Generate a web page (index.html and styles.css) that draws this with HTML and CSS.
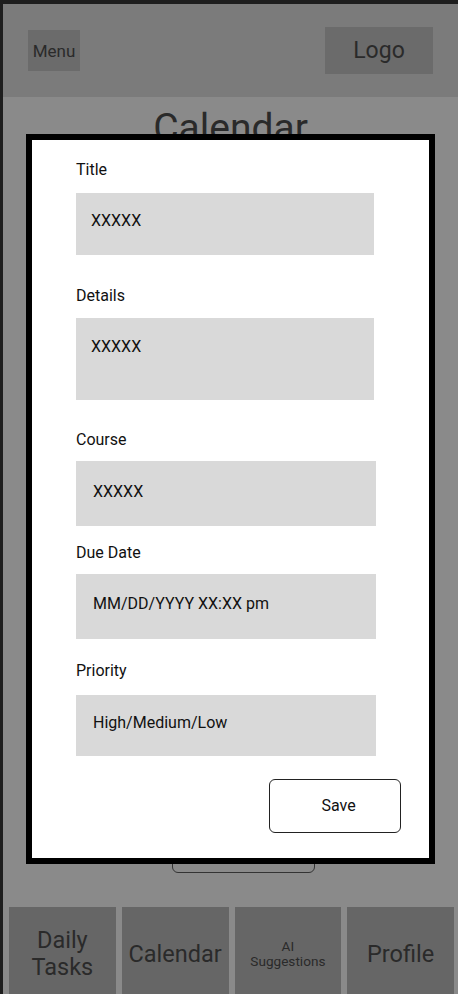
FILE: index.html
```html
<!DOCTYPE html>
<html>

<head>
    <title>Calendar - New Task</title>
    <meta charset="utf-8">
    <meta name="viewport" content="width=device-width, initial-scale=1">
    <link rel="stylesheet" href="styles.css">
</head>

<body>
    <div class="app">
        <header class="topbar">
            <div class="menu-btn">Menu</div>
            <div class="logo">Logo</div>
        </header>

        <main class="content">
            <h1 class="page-title">Calendar</h1>
            <div class="add-btn" aria-label="Add task"></div>
        </main>

        <nav class="tabbar">
            <div class="tab">Daily<br>Tasks</div>
            <div class="tab">Calendar</div>
            <div class="tab tab-small">AI<br>Suggestions</div>
            <div class="tab">Profile</div>
        </nav>

        <div class="modal">
            <form class="task-form">
                <div class="field field-title">
                    <label class="field-label">Title</label>
                    <div class="field-box">XXXXX</div>
                </div>
                <div class="field field-details">
                    <label class="field-label">Details</label>
                    <div class="field-box">XXXXX</div>
                </div>
                <div class="field field-course">
                    <label class="field-label">Course</label>
                    <div class="field-box">XXXXX</div>
                </div>
                <div class="field field-due">
                    <label class="field-label">Due Date</label>
                    <div class="field-box">MM/DD/YYYY XX:XX pm</div>
                </div>
                <div class="field field-priority">
                    <label class="field-label">Priority</label>
                    <div class="field-box">High/Medium/Low</div>
                </div>
                <button type="button" class="save-btn">Save</button>
            </form>
        </div>
    </div>
</body>

</html>
```

FILE: styles.css
```css
html,
body {
    margin: 0;
    height: 100%;
    overflow: hidden;
}

body {
    font-family: Roboto, "Noto Sans", sans-serif;
    background-color: #1e1e1e;
    color: #222222;
    padding: 4px 0 0 3px;
    box-sizing: border-box;
}

.app {
    position: relative;
    display: flex;
    flex-direction: column;
    height: 997px;
    background-color: #8a8a8a;
}

/* top bar */
.topbar {
    height: 93px;
    display: flex;
    justify-content: space-between;
    align-items: center;
    padding: 0 25px;
    background-color: #7b7b7b;
}

.menu-btn {
    width: 52px;
    height: 41px;
    display: flex;
    align-items: center;
    justify-content: center;
    font-size: 17px;
    background-color: #6b6b6b;
    color: #2a2a2a;
}

.logo {
    width: 108px;
    height: 47px;
    display: flex;
    align-items: center;
    justify-content: center;
    font-size: 23px;
    background-color: #6b6b6b;
    color: #2a2a2a;
}

/* page behind the modal */
.content {
    flex-grow: 1;
    display: flex;
    flex-direction: column;
    align-items: center;
}

.page-title {
    margin: 9px 0 0;
    font-size: 39px;
    font-weight: normal;
    line-height: 1.17;
    color: #2a2a2a;
}

.add-btn {
    margin-top: auto;
    margin-bottom: 34px;
    margin-left: 25px;
    width: 143px;
    height: 48px;
    border: 1px solid #333333;
    border-radius: 6px;
    box-sizing: border-box;
}

/* bottom tabs */
.tabbar {
    height: 94px;
    display: grid;
    grid-template-columns: repeat(4, 1fr);
    gap: 6px;
    padding: 0 4px 0 6px;
}

.tab {
    display: flex;
    align-items: center;
    justify-content: center;
    text-align: center;
    font-size: 23.5px;
    line-height: 27px;
    background-color: #666666;
    color: #2a2a2a;
}

.tab-small {
    font-size: 13.6px;
    line-height: 15px;
}

/* modal */
.modal {
    position: absolute;
    top: 130px;
    left: 23px;
    width: 409px;
    border: 6px solid #000000;
    background-color: #ffffff;
    box-sizing: border-box;
    padding: 20px 28px 25px 44px;
}

.task-form {
    display: flex;
    flex-direction: column;
    color: #111111;
}

.field {
    display: flex;
    flex-direction: column;
}

.field-label {
    font-size: 16px;
    line-height: 20px;
}

.field-box {
    display: flex;
    align-items: center;
    font-size: 16px;
    line-height: 20px;
    background-color: #d9d9d9;
    box-sizing: border-box;
    width: 300px;
    padding: 0 17px 3px;
}

.field-title .field-box {
    margin-top: 13px;
    height: 62px;
    width: 298px;
    padding: 0 15px 6px;
}

.field-details {
    margin-top: 31px;
}

.field-details .field-box {
    margin-top: 12px;
    height: 82px;
    width: 298px;
    align-items: flex-start;
    padding: 19px 15px 0;
}

.field-course {
    margin-top: 30px;
}

.field-course .field-box {
    margin-top: 11px;
    height: 65px;
}

.field-due {
    margin-top: 17px;
}

.field-due .field-box {
    margin-top: 11px;
    height: 65px;
    padding-bottom: 5px;
}

.field-priority {
    margin-top: 22px;
}

.field-priority .field-box {
    margin-top: 14px;
    height: 61px;
    padding-bottom: 5px;
}

.save-btn {
    align-self: flex-end;
    margin-top: 23px;
    width: 132px;
    height: 54px;
    font-family: Roboto, "Noto Sans", sans-serif;
    font-size: 16px;
    color: #111111;
    background-color: #ffffff;
    border: 1px solid #222222;
    border-radius: 6px;
    padding: 0 0 2px 7px;
}
```
